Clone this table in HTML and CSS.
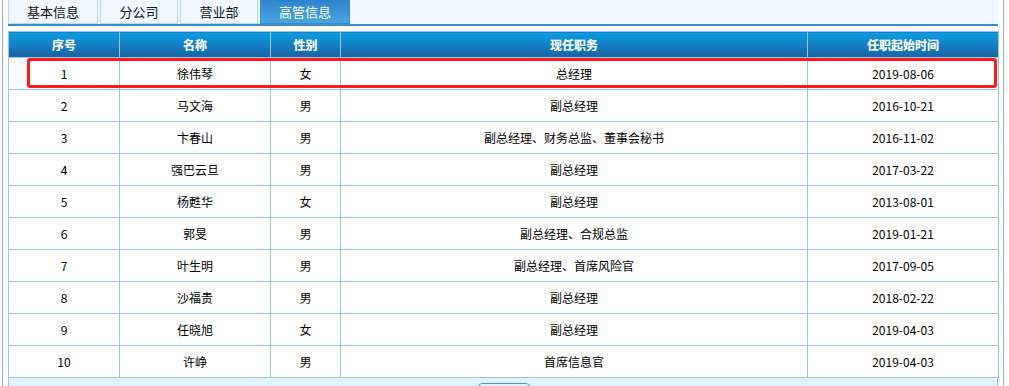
FILE: index.html
```html
<!DOCTYPE html>
<html lang="zh-CN">
<head>
<meta charset="utf-8">
<title>高管信息</title>
<link rel="stylesheet" href="styles.css">
</head>
<body>
<div class="frame">
  <div class="tabs">
    <div class="tab t-wide">基本信息</div>
    <div class="tab t-mid">分公司</div>
    <div class="tab t-mid">营业部</div>
    <div class="tab t-wide active">高管信息</div>
  </div>
  <div class="panel">
    <table class="grid">
      <colgroup>
        <col class="c1"><col class="c2"><col class="c3"><col class="c4"><col class="c5">
      </colgroup>
      <thead>
        <tr><th>序号</th><th>名称</th><th>性别</th><th>现任职务</th><th>任职起始时间</th></tr>
      </thead>
      <tbody>
        <tr><td>1</td><td>徐伟琴</td><td>女</td><td>总经理</td><td>2019-08-06</td></tr>
        <tr><td>2</td><td>马文海</td><td>男</td><td>副总经理</td><td>2016-10-21</td></tr>
        <tr><td>3</td><td>卞春山</td><td>男</td><td>副总经理、财务总监、董事会秘书</td><td>2016-11-02</td></tr>
        <tr><td>4</td><td>强巴云旦</td><td>男</td><td>副总经理</td><td>2017-03-22</td></tr>
        <tr><td>5</td><td>杨甦华</td><td>女</td><td>副总经理</td><td>2013-08-01</td></tr>
        <tr><td>6</td><td>郭旻</td><td>男</td><td>副总经理、合规总监</td><td>2019-01-21</td></tr>
        <tr><td>7</td><td>叶生明</td><td>男</td><td>副总经理、首席风险官</td><td>2017-09-05</td></tr>
        <tr><td>8</td><td>沙福贵</td><td>男</td><td>副总经理</td><td>2018-02-22</td></tr>
        <tr><td>9</td><td>任晓旭</td><td>女</td><td>副总经理</td><td>2019-04-03</td></tr>
        <tr><td>10</td><td>许峥</td><td>男</td><td>首席信息官</td><td>2019-04-03</td></tr>
      </tbody>
    </table>
    <div class="footer"><span class="btn"></span></div>
  </div>
  <div class="highlight"></div>
</div>
</body>
</html>
```
FILE: styles.css
```css
html, body {
  margin: 0;
  padding: 0;
  background: #fff;
}
body {
  font-family: "Noto Sans CJK SC", "Liberation Sans", sans-serif;
  font-size: 12px;
  color: #000;
}
.frame {
  position: relative;
  margin-left: 2px;
  width: 990px;
  height: 386px;
  padding: 0 5px;
  border-left: 1px solid #98abc9;
  border-right: 1px solid #98abc9;
  overflow: hidden;
}
.tabs {
  display: flex;
  gap: 2px;
  height: 24px;
  background: #eef8fe;
  border-bottom: 2px solid #3b8bcb;
}
.tab {
  box-sizing: border-box;
  height: 24px;
  border: 1px solid #b9d8ef;
  border-top: none;
  display: flex;
  align-items: center;
  justify-content: center;
  font-size: 13px;
  color: #111;
  background: #eef8fe;
}
.t-wide { width: 90px; }
.t-mid { width: 78px; }
.tab.active {
  color: #fff;
  border-color: #3b8bcb;
  background: linear-gradient(#2e84ca, #4aa6e1);
}
.panel {
  margin-top: 5px;
}
.grid {
  width: 990px;
  border-collapse: collapse;
  table-layout: fixed;
}
.c1 { width: 111px; }
.c2 { width: 151px; }
.c3 { width: 70px; }
.c4 { width: 467px; }
.c5 { width: 191px; }
.grid th {
  height: 25px;
  padding: 0;
  color: #fff;
  font-weight: bold;
  font-size: 12px;
  text-shadow: 0 0 1px rgba(255,255,255,0.4);
  background: linear-gradient(#0a9de2, #1a62a2);
  border: 1px solid #9dc3e6;
  border-bottom: none;
}
.grid td {
  height: 31px;
  padding: 0;
  text-align: center;
  border: 1px solid #9dc3e6;
}
.footer {
  height: 30px;
  background: #dff3fc;
  border-left: 1px solid #9dc3e6;
  border-right: 1px solid #9dc3e6;
  position: relative;
}
.btn {
  position: absolute;
  left: 469px;
  top: 5px;
  width: 50px;
  height: 22px;
  border: 1px solid #4c97cf;
  border-radius: 4px;
  background: linear-gradient(#e2f3fd, #bfe1f7);
}
.highlight {
  position: absolute;
  left: 24px;
  top: 58px;
  width: 964px;
  height: 24px;
  border: 3px solid #ff1a1a;
  border-radius: 3px;
}
```
